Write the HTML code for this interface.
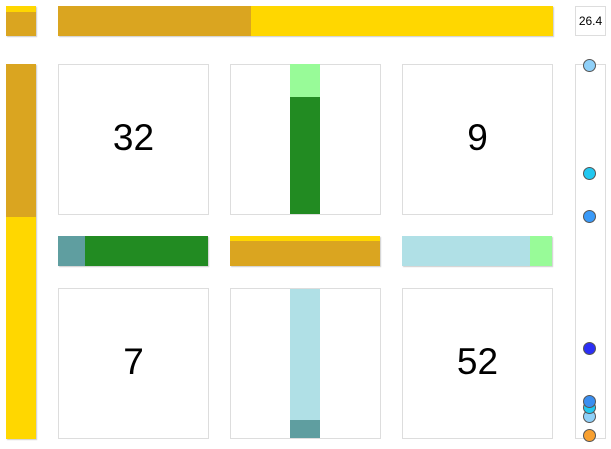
<!DOCTYPE html>
<html><head><style>
body{margin:0;width:611px;height:449px;background:#fff;position:relative;overflow:hidden;font-family:"Liberation Sans",sans-serif}
div{position:absolute;box-sizing:border-box}
.b{border:1px solid #ddd;background:#fff;font-size:37px;display:flex;align-items:center;justify-content:center;padding-bottom:4px}
.s{box-shadow:1px 1px 1px #ccc}
.c{width:13px;height:13px;border-radius:50%;border:1px solid #555;left:583px}
</style></head><body>
<div class="s" style="left:6px;top:6px;width:30px;height:30px;background:#daa520"></div>
<div style="left:6px;top:6px;width:30px;height:6px;background:#ffd700"></div>
<div class="s" style="left:58px;top:6px;width:495px;height:30px;background:#ffd700"></div>
<div style="left:58px;top:6px;width:193px;height:30px;background:#daa520"></div>
<div class="b" style="left:575px;top:6px;width:31px;height:30px;font-size:12px;padding-bottom:0">26.4</div>

<div class="s" style="left:6px;top:64px;width:30px;height:375px;background:#ffd700"></div>
<div style="left:6px;top:64px;width:30px;height:153px;background:#daa520"></div>

<div class="b" style="left:58px;top:64px;width:151px;height:151px">32</div>
<div class="b" style="left:230px;top:64px;width:151px;height:151px"></div>
<div style="left:290px;top:64px;width:30px;height:33px;background:#98fb98"></div>
<div style="left:290px;top:97px;width:30px;height:117px;background:#228b22"></div>
<div class="b" style="left:402px;top:64px;width:151px;height:151px">9</div>

<div class="s" style="left:58px;top:236px;width:150px;height:30px;background:#228b22"></div>
<div style="left:58px;top:236px;width:27px;height:30px;background:#5f9ea0"></div>
<div class="s" style="left:230px;top:236px;width:150px;height:30px;background:#daa520"></div>
<div style="left:230px;top:236px;width:150px;height:5px;background:#ffd700"></div>
<div class="s" style="left:402px;top:236px;width:150px;height:30px;background:#b0e0e6"></div>
<div style="left:530px;top:236px;width:22px;height:30px;background:#98fb98"></div>

<div class="b" style="left:58px;top:288px;width:151px;height:151px">7</div>
<div class="b" style="left:230px;top:288px;width:151px;height:151px"></div>
<div style="left:290px;top:289px;width:30px;height:131px;background:#b0e0e6"></div>
<div style="left:290px;top:420px;width:30px;height:18px;background:#5f9ea0"></div>
<div class="b" style="left:402px;top:288px;width:151px;height:151px">52</div>

<div class="b" style="left:575px;top:64px;width:31px;height:375px"></div>
<div class="c" style="top:59px;background:#8fd0f8"></div>
<div class="c" style="top:167px;background:#22c8f0"></div>
<div class="c" style="top:210px;background:#3a9af8"></div>
<div class="c" style="top:342px;background:#2b2ef5"></div>
<div class="c" style="top:410px;background:#8fd0f8"></div>
<div class="c" style="top:401px;background:#22c8f0"></div>
<div class="c" style="top:395px;background:#3a8ef0"></div>
<div class="c" style="top:429px;background:#f8a030"></div>
</body></html>
